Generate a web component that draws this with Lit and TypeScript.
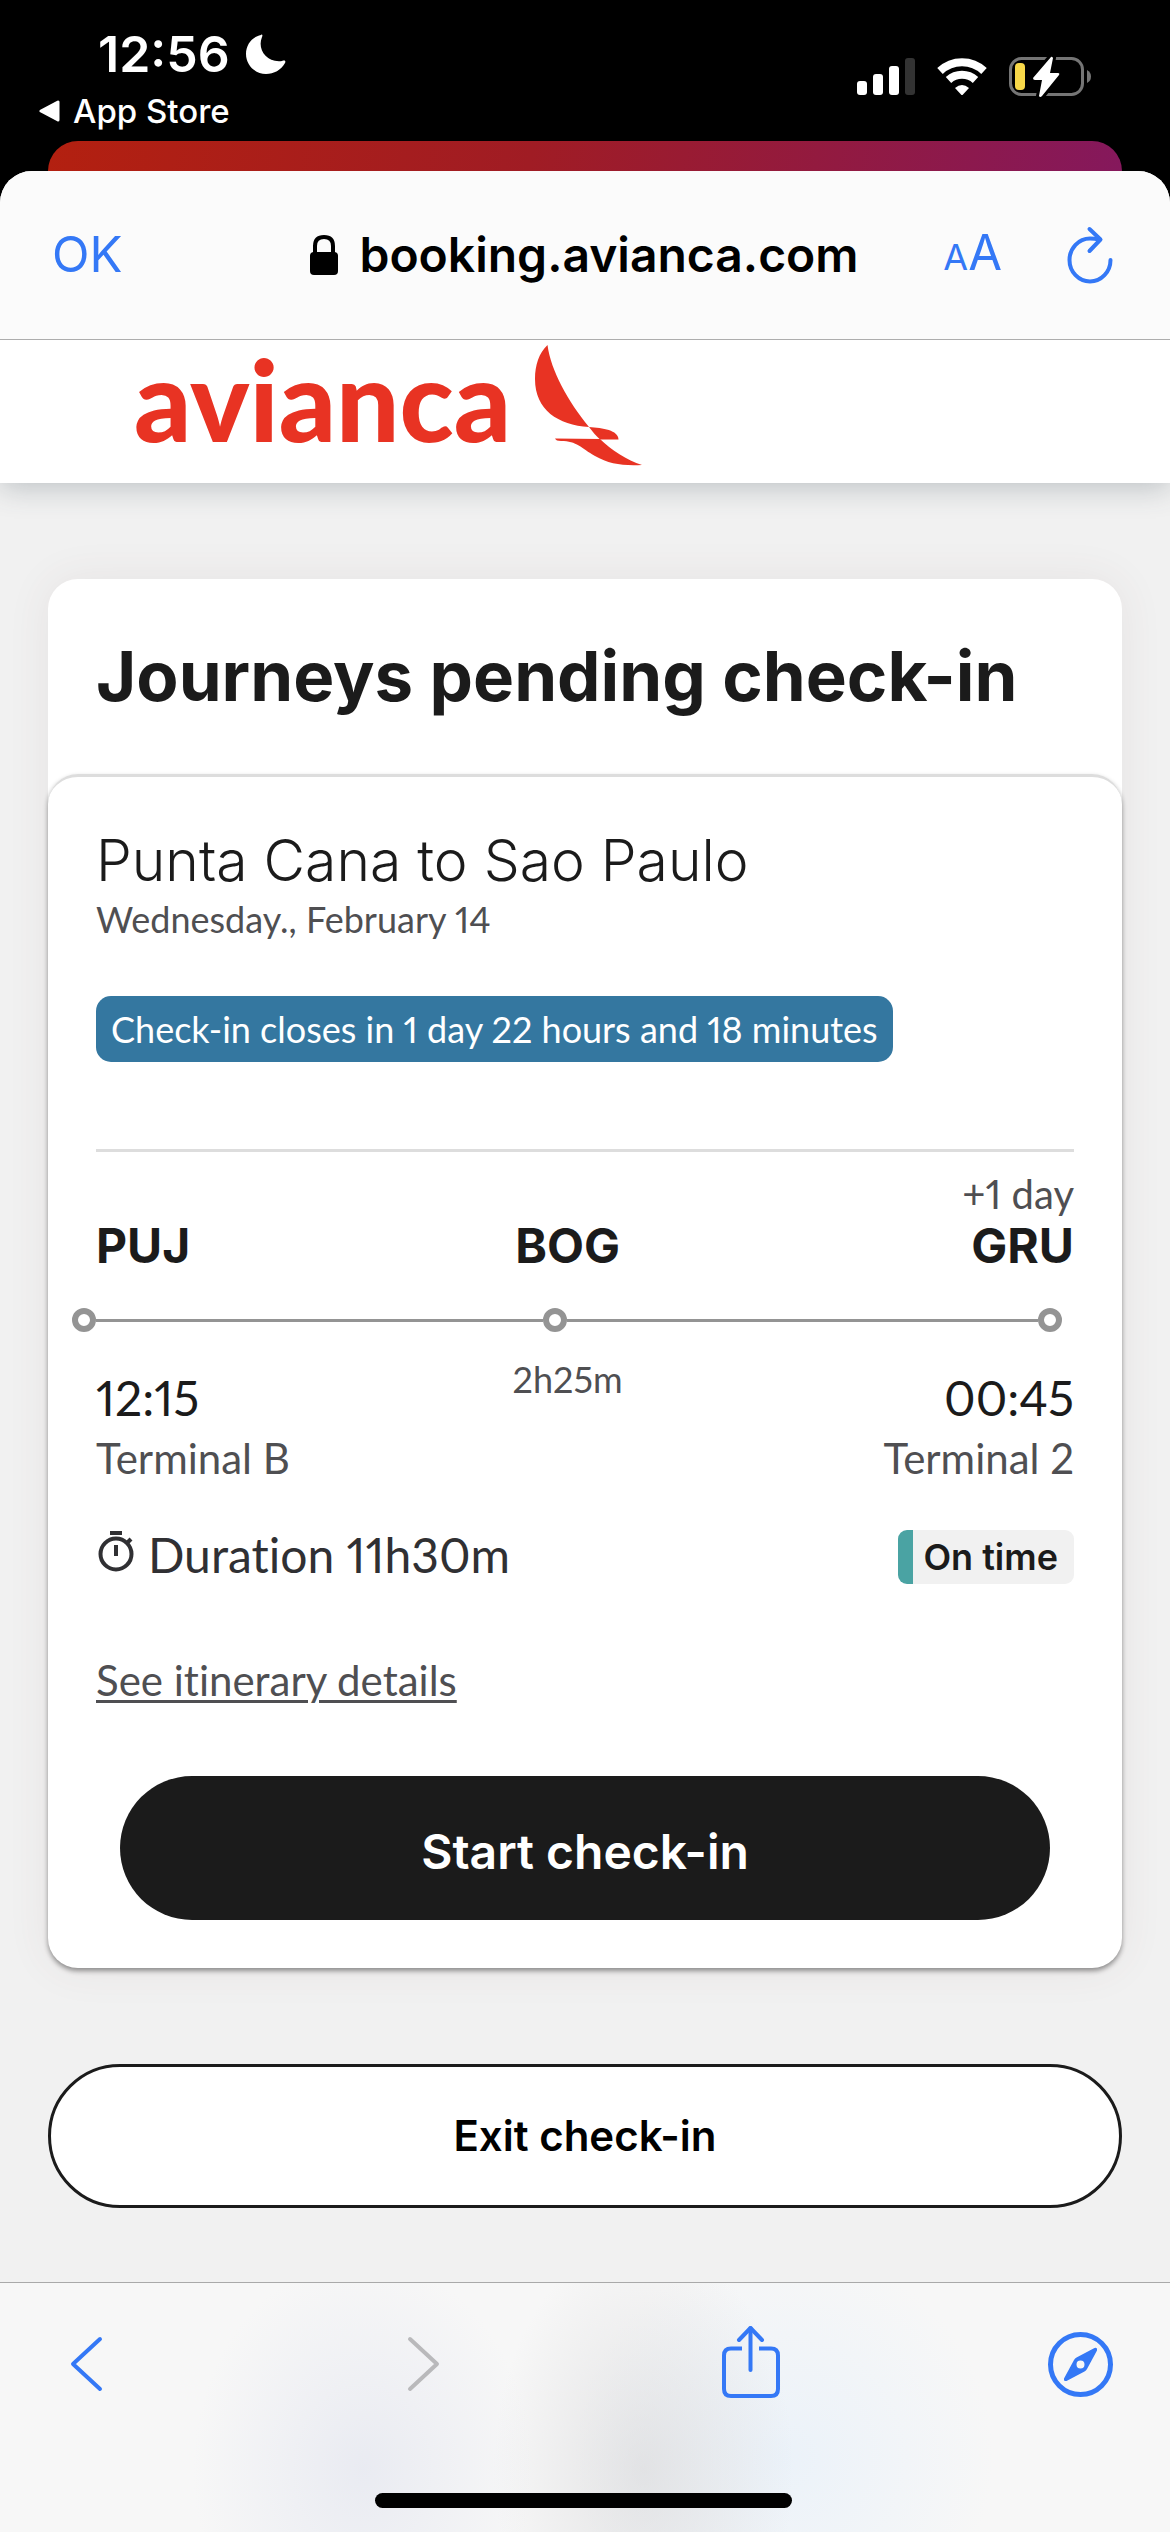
import { LitElement, html, css, svg } from "lit";
import { customElement } from "lit/decorators.js";

@customElement("phone-status")
class PhoneStatus extends LitElement {
  static styles = css`
    :host {
      display: flex;
      justify-content: space-between;
      padding: 24px 79px 10px 39px;
      color: #fff;
      background: #000;
    }
    .left {
      display: flex;
      flex-direction: column;
      gap: 7px;
    }
    .clock {
      display: flex;
      align-items: center;
      gap: 16px;
      padding-left: 59px;
      font-size: 50px;
      font-weight: 600;
      line-height: 60px;
    }
    .back {
      display: flex;
      align-items: center;
      gap: 12px;
      color: #fff;
      text-decoration: none;
      font-size: 33px;
      font-weight: 500;
      line-height: 40px;
    }
    .right {
      display: flex;
      align-items: center;
      gap: 20px;
      height: 106px;
    }
    svg {
      display: block;
    }
  `;
  render() {
    return html`
      <div class="left">
        <div class="clock">
          <span>12:56</span>
          <svg width="40" height="40" viewBox="0 0 40 40" aria-hidden="true">
            <path
              d="M15 1C16 0 17 1 16 3C11 15 20 29 36 27C39 26 40 27 39 29C35 36 28 40 20 40C9 40 0 31 0 20C0 11 6 3 15 1Z"
              fill="#fff"
            />
          </svg>
        </div>
        <a class="back" href="#">
          <svg width="22" height="22" viewBox="0 0 22 22" aria-hidden="true">
            <path d="M19 2V20L2 11Z" fill="#fff" stroke="#fff" stroke-width="3" stroke-linejoin="round" />
          </svg>
          <span>App Store</span>
        </a>
      </div>
      <div class="right">
        <svg width="60" height="40" viewBox="0 0 60 40" aria-hidden="true">
          <g fill="#fff">
            <rect x="1" y="24" width="10" height="14" rx="3" />
            <rect x="17" y="17" width="10" height="21" rx="3" />
            <rect x="33" y="9" width="10" height="29" rx="3" />
          </g>
          <rect x="49" y="1" width="10" height="37" rx="3" fill="#333" />
        </svg>
        <svg width="52" height="40" viewBox="0 0 52 40" aria-hidden="true">
          <g fill="none" stroke="#fff" stroke-width="8">
            <path d="M4 14A32 32 0 0 1 48 14" />
            <path d="M12.5 23A20 20 0 0 1 39.500 23" />
          </g>
          <path d="M19 31Q26 25 33 31L27 37.500Q26 38.500 25 37.500Z" fill="#fff" />
        </svg>
        <svg width="83" height="42" viewBox="0 0 83 42" aria-hidden="true">
          <rect x="2.500" y="2.500" width="72" height="36" rx="11" fill="none" stroke="#757575" stroke-width="3" />
          <path d="M79 14Q83 16 83 20.500Q83 25 79 27Z" fill="#757575" />
          <rect x="7" y="7" width="10" height="27" rx="4" fill="#f8d849" />
          <path
            d="M43 1L25 22Q25 24 27 24H34L31 40Q32 42 34 40L51 19Q52 17 50 17H42L45 2Q44 0 43 1Z"
            fill="#fff"
            stroke="#000"
            stroke-width="6"
            paint-order="stroke"
          />
        </svg>
      </div>
    `;
  }
}

@customElement("browser-bar")
class BrowserBar extends LitElement {
  static styles = css`
    :host {
      display: grid;
      grid-template-columns: 1fr auto 1fr;
      align-items: center;
      position: relative;
      z-index: 1;
      min-height: 168px;
      padding: 0 54px 0 52px;
      color: #000;
      background: #fbfbfb;
      border-bottom: 1px solid #adadad;
    }
    button {
      display: flex;
      align-items: baseline;
      padding: 0;
      border: 0;
      background: none;
      color: #3478f6;
      font: inherit;
      font-size: 49px;
      line-height: 60px;
    }
    .address {
      display: flex;
      align-items: center;
      gap: 20px;
      font-size: 48px;
      font-weight: 600;
      line-height: 60px;
    }
    .tools {
      display: flex;
      align-items: center;
      justify-content: flex-end;
      gap: 64px;
    }
    .small {
      font-size: 36px;
    }
    svg {
      display: block;
    }
  `;
  render() {
    return html`
      <button>OK</button>
      <div class="address">
        <svg width="30" height="42" viewBox="0 0 30 42" aria-hidden="true">
          <rect x="1" y="18" width="28" height="23" rx="4" />
          <path d="M6 20V12Q6 3 15 3Q24 3 24 12V20" fill="none" stroke="#000" stroke-width="4" />
        </svg>
        <span>booking.avianca.com</span>
      </div>
      <div class="tools">
        <button aria-label="Text size"><span class="small">A</span><span>A</span></button>
        <button aria-label="Reload">
          <svg width="50" height="58" viewBox="0 0 50 58" aria-hidden="true">
            <g fill="none" stroke="#3478f6" stroke-width="4" stroke-linecap="round" stroke-linejoin="round">
              <path d="M44.500 34A20.500 21.500 0 1 1 24 12.500Q29 12.500 33 13.500" />
              <path d="M23.500 3L34.500 13.500L23.500 25" />
            </g>
          </svg>
        </button>
      </div>
    `;
  }
}

@customElement("brand-header")
class BrandHeader extends LitElement {
  static styles = css`
    :host {
      display: block;
      position: relative;
      background: #fff;
      box-shadow: 0 4px 28px rgba(60, 75, 85, 0.3);
    }
    .logo {
      display: flex;
      align-items: flex-start;
      gap: 24px;
      padding: 5px 134px 17px;
      color: #e83323;
      font-family: Lato, "Open Sans", sans-serif;
      font-size: 112px;
      font-weight: 900;
      line-height: 108px;
      text-decoration: none;
    }
    svg {
      display: block;
    }
  `;
  render() {
    return html`
      <a class="logo" href="#">
        <span>avianca</span>
        <svg width="108" height="121" viewBox="0 0 108 121" aria-hidden="true">
          <g fill="#e83323">
            <path d="M12.500 0C16 26 33 56 54 82C23 80 0 65 0 34C0 20 4 8 12.500 0Z" />
            <path d="M54 82C68 83 83 85 83.500 94.500H65Q59 89 54 82Z" />
            <path d="M20 93.500L65 94C76 105 92 115 107 120C88 121 74 119 60 111C46 103 42 96 26 96Q21 96 20 93.500Z" />
          </g>
        </svg>
      </a>
    `;
  }
}

@customElement("journey-card")
class JourneyCard extends LitElement {
  static styles = css`
    :host {
      display: block;
      color: #1b1b1b;
      background: #fff;
      border-radius: 30px;
      box-shadow: 0 0 44px rgba(100, 60, 70, 0.08);
    }
    h1,
    h2,
    p {
      margin: 0;
    }
    .heading {
      padding: 52px 48px 53px;
    }
    h1 {
      font-size: 69px;
      font-weight: 700;
      line-height: 90px;
    }
    .journey {
      padding: 48px;
      border-top: 3px solid #ddd;
      border-radius: 30px;
      box-shadow: 0 3px 5px rgba(0, 0, 0, 0.4);
    }
    h2 {
      font-size: 57px;
      font-weight: 300;
      line-height: 72px;
    }
    .date,
    .deadline,
    .muted,
    .times,
    .duration,
    .details {
      font-family: Lato, "Open Sans", sans-serif;
      font-weight: 400;
      font-variant-ligatures: none;
      font-variant-numeric: proportional-nums;
    }
    .date {
      color: #4f4f52;
      font-size: 36px;
      line-height: 44px;
    }
    .deadline {
      display: inline-block;
      margin-top: 55px;
      padding: 12px 15px;
      color: #fff;
      background: #3477a0;
      border-radius: 15px;
      font-size: 36px;
      line-height: 42px;
    }
    .rule {
      margin: 87px 0 18px;
      border: 0;
      border-top: 3px solid #ddd;
    }
    .stops {
      display: grid;
      grid-template-columns: 12fr auto 13fr;
    }
    .codes {
      align-items: end;
      font-size: 48px;
      font-weight: 700;
      line-height: 50px;
    }
    .end {
      text-align: right;
    }
    .muted {
      color: #4f4f52;
      font-size: 42px;
      line-height: 60px;
    }
    .codes .muted {
      padding-bottom: 3px;
      font-size: 40px;
      line-height: 48px;
    }
    .rail {
      display: flex;
      align-items: center;
      margin: 37px 12px 25px -24px;
    }
    .dot {
      box-sizing: border-box;
      width: 24px;
      height: 24px;
      border: 6px solid #949494;
      border-radius: 50%;
    }
    .leg {
      height: 3px;
      background: #949494;
    }
    .first {
      flex: 19;
    }
    .second {
      flex: 20;
    }
    .times {
      font-size: 48px;
      line-height: 60px;
    }
    .time {
      padding-top: 11px;
    }
    .layover {
      color: #4f4f52;
      font-size: 36px;
      line-height: 44px;
    }
    .summary {
      display: flex;
      justify-content: space-between;
      align-items: flex-start;
      margin-top: 42px;
    }
    .duration {
      display: flex;
      align-items: center;
      gap: 12px;
      color: #303033;
      font-size: 48px;
      line-height: 50px;
    }
    .status {
      padding: 0 16px 0 10px;
      border-left: 15px solid #4aa3a3;
      border-radius: 9px;
      background: #f1f1f1;
      font-size: 36px;
      font-weight: 600;
      line-height: 54px;
    }
    .details {
      display: inline-block;
      margin: 69px 0;
      color: #4f4f52;
      font-size: 42px;
      line-height: 54px;
      text-decoration-thickness: 3px;
      text-underline-offset: 4px;
    }
    .start {
      display: block;
      width: calc(100% - 48px);
      margin: 0 24px;
      padding: 46px 24px 38px;
      border: 0;
      border-radius: 72px;
      color: #fff;
      background: #1b1b1b;
      font: inherit;
      font-size: 48px;
      font-weight: 600;
      line-height: 60px;
    }
    svg {
      display: block;
    }
  `;
  render() {
    return html`
      <header class="heading"><h1>Journeys pending check-in</h1></header>
      <section class="journey">
        <h2>Punta Cana to Sao Paulo</h2>
        <p class="date">Wednesday., February 14</p>
        <span class="deadline">Check-in closes in 1 day 22 hours and 18 minutes</span>
        <hr class="rule" />
        <div class="stops codes">
          <div>PUJ</div>
          <div>BOG</div>
          <div class="end">
            <div class="muted">+1 day</div>
            <div>GRU</div>
          </div>
        </div>
        <div class="rail">
          <span class="dot"></span><span class="leg first"></span><span class="dot"></span
          ><span class="leg second"></span><span class="dot"></span>
        </div>
        <div class="stops times">
          <div class="time">
            <div>12:15</div>
            <div class="muted">Terminal B</div>
          </div>
          <div class="layover">2h25m</div>
          <div class="time end">
            <div>00:45</div>
            <div class="muted">Terminal 2</div>
          </div>
        </div>
        <div class="summary">
          <div class="duration">
            <svg width="40" height="50" viewBox="0 0 40 50" aria-hidden="true">
              <g fill="none" stroke="#303033" stroke-width="4">
                <circle cx="20" cy="24" r="15.500" />
                <path d="M20 15V26" />
                <path d="M14 3H26" />
                <path d="M31 13L35 9" />
              </g>
            </svg>
            <span>Duration 11h30m</span>
          </div>
          <span class="status">On time</span>
        </div>
        <a class="details" href="#">See itinerary details</a>
        <button class="start">Start check-in</button>
      </section>
    `;
  }
}

@customElement("browser-toolbar")
class BrowserToolbar extends LitElement {
  static styles = css`
    :host {
      display: block;
      padding: 40px 57px 24px 54px;
      border-top: 1px solid #a9a9a9;
      background:
        radial-gradient(ellipse 170px 210px at 31% 75%, rgba(224, 227, 238, 0.6), transparent),
        radial-gradient(ellipse 150px 230px at 55% 75%, rgba(214, 214, 216, 0.6), transparent),
        radial-gradient(ellipse 210px 210px at 67% 70%, rgba(230, 240, 250, 0.7), transparent),
        #f7f7f7;
    }
    nav {
      display: flex;
      justify-content: space-between;
    }
    button {
      padding: 0;
      border: 0;
      background: none;
    }
    svg {
      display: block;
    }
    .home {
      width: 417px;
      height: 15px;
      margin: 88px auto 0;
      border-radius: 8px;
      background: #000;
    }
  `;
  icon(label: string, shape: unknown) {
    return html`<button aria-label=${label}>
      <svg width="65" height="82" viewBox="0 0 65 82" fill="none" stroke="#3478f6" stroke-width="4" stroke-linecap="round" stroke-linejoin="round">
        ${shape}
      </svg>
    </button>`;
  }
  render() {
    return html`
      <nav>
        ${this.icon("Back", svg`<path d="M46 16L19 41L46 66" />`)}
        ${this.icon("Forward", svg`<path d="M25 16L52 41L25 66" stroke="#b9b9bb" />`)}
        ${this.icon(
          "Share",
          svg`<path d="M25 25.500H14Q7 25.500 7 32.500V66Q7 73 14 73H54Q61 73 61 66V32.500Q61 25.500 54 25.500H42" stroke-linecap="butt" /><path d="M33.500 47V5" /><path d="M22 17L33.500 5L45 17" />`,
        )}
        ${this.icon(
          "Open in Safari",
          svg`<circle cx="32.500" cy="41.500" r="30" stroke-width="5" /><path fill="#3478f6" stroke="none" fill-rule="evenodd" d="M46.500 25Q49.500 24 49 27.500L39 46Q38 47.500 36.500 48.500L18.500 58Q15.500 58.500 16 55.500L26 37Q27 35 28.500 34.500ZM32.500 37.500A4 4 0 1 0 32.500 45.500A4 4 0 1 0 32.500 37.500Z" />`,
        )}
      </nav>
      <div class="home"></div>
    `;
  }
}

@customElement("app-root")
class AppRoot extends LitElement {
  static styles = css`
    :host {
      display: flex;
      flex-direction: column;
      min-height: 100vh;
      background: #000;
      font-family: Inter, "Liberation Sans", sans-serif;
    }
    .previous {
      height: 30px;
      margin: 0 48px;
      border-radius: 30px 30px 0 0;
      background: linear-gradient(100deg, #b32010, #a01c24 45%, #85185c);
    }
    .sheet {
      display: flex;
      flex: 1;
      flex-direction: column;
      overflow: hidden;
      border-radius: 32px 32px 0 0;
      background: #f1f1f1;
    }
    main {
      flex: 1;
      padding: 96px 48px 74px;
    }
    .exit {
      display: block;
      width: 100%;
      margin-top: 96px;
      padding: 39px 24px;
      border: 3px solid #1b1b1b;
      border-radius: 72px;
      color: #000;
      background: #fff;
      font: inherit;
      font-size: 42px;
      font-weight: 600;
      line-height: 60px;
    }
  `;
  render() {
    return html`
      <phone-status></phone-status>
      <div class="previous"></div>
      <div class="sheet">
        <browser-bar></browser-bar>
        <brand-header></brand-header>
        <main>
          <journey-card></journey-card>
          <button class="exit">Exit check-in</button>
        </main>
        <browser-toolbar></browser-toolbar>
      </div>
    `;
  }
}
